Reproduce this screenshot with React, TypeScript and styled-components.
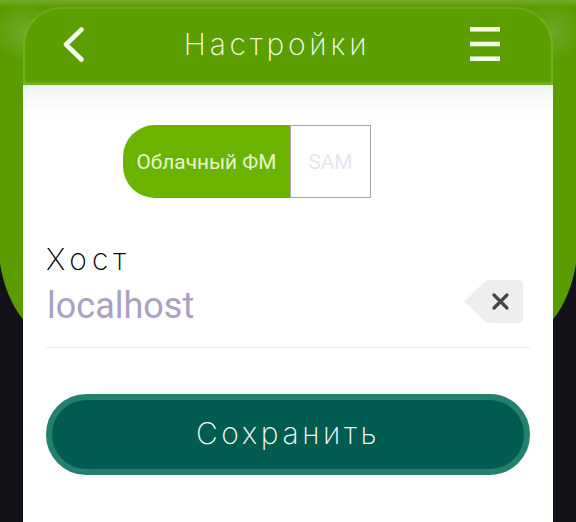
import React from "react";
import styled, { createGlobalStyle } from "styled-components";

const Global = createGlobalStyle`
  html, body { margin: 0; padding: 0; background: #121118; }
  #root { width: 576px; height: 522px; overflow: hidden; }
`;

const Page = styled.div`
  position: relative;
  width: 576px;
  height: 522px;
  overflow: hidden;
  box-sizing: border-box;
  padding: 7px 23px 0 23px;
  display: flex;
  flex-direction: column;
  background: #121118;
  isolation: isolate;
  &::before {
    content: "";
    position: absolute;
    z-index: -1;
    left: -2px;
    right: -2px;
    top: -10px;
    height: 348px;
    border-radius: 0 0 60px 60px / 0 0 100px 100px;
    background:
      linear-gradient(180deg, #7aae32 0, #74aa2a 10px, rgba(116,170,42,0) 17px),
      radial-gradient(circle at 26px 42px, #72aa2a 0, rgba(114,170,42,0) 30px),
      radial-gradient(circle at 554px 42px, #6ea626 0, rgba(110,166,38,0) 30px),
      #5a9c00;
  }
`;

const Header = styled.header`
  box-sizing: border-box;
  height: 78px;
  flex: none;
  display: flex;
  align-items: center;
  justify-content: space-between;
  padding: 0 51px 3px 38px;
  background: #5a9e00;
  border-radius: 38px 38px 0 0;
  border: 2px solid #72b024;
  border-bottom-width: 3px;
  border-top-color: #6aa81c;
`;

const Title = styled.h1`
  margin: 0;
  font: 200 30px Inter, "Noto Sans", sans-serif;
  letter-spacing: 3.8px;
  color: #f6fcea;
`;

const Panel = styled.main`
  flex: 1;
  background: linear-gradient(180deg, #efefef 0, #f8f8f8 10px, #fff 32px);
  padding: 40px 23px 0 23px;
  display: flex;
  flex-direction: column;
`;

const Toggle = styled.div`
  display: flex;
  width: 248px;
  height: 73px;
  margin-left: 77px;
`;

const Segment = styled.div<{ $active?: boolean }>`
  box-sizing: border-box;
  display: flex;
  align-items: center;
  justify-content: center;
  width: ${(p) => (p.$active ? 167 : 81)}px;
  font: 400 20.8px Roboto, "Noto Sans", sans-serif;
  color: ${(p) => (p.$active ? "#e6f5cf" : "#e6e6ee")};
  background: ${(p) => (p.$active ? "#6ab400" : "#fff")};
  border-radius: ${(p) => (p.$active ? "32px 0 0 32px" : "0")};
  border: ${(p) => (p.$active ? "none" : "1px solid #a8a8a8")};
`;

const Label = styled.label`
  margin-top: 43px;
  font: 200 30px Inter, "Noto Sans", sans-serif;
  letter-spacing: 5px;
  line-height: 36px;
  color: #000;
`;

const InputRow = styled.div`
  display: flex;
  align-items: center;
  justify-content: space-between;
  height: 69px;
  margin-top: 1px;
  border-bottom: 1px solid #ededed;
  padding-right: 7px;
`;

const Value = styled.span`
  font: 400 36px Roboto, sans-serif;
  color: #ab9fc2;
  margin-top: -13px;
  margin-left: 1px;
`;

const ClearKey = styled.button`
  width: 59px;
  height: 43px;
  margin-top: -22px;
  padding: 0;
  border: none;
  background: none;
  display: block;
`;

const SaveButton = styled.button`
  box-sizing: border-box;
  width: 484px;
  height: 81px;
  margin-top: 46px;
  padding: 0 0 4px;
  border-radius: 41px;
  border: 6px solid #23806f;
  background: #005c50;
  color: #f4fbf9;
  font: 200 30px Inter, "Noto Sans", sans-serif;
  letter-spacing: 3.6px;
`;

export default function App() {
  return (
    <Page>
      <Global />
      <Header>
        <svg width="21" height="35" viewBox="0 0 21 35" fill="none">
          <path d="M18.5 2.5 3 17.5 18.5 32.5" stroke="#f4fbe8" strokeWidth="4.6" strokeLinecap="round" strokeLinejoin="round" />
        </svg>
        <Title>Настройки</Title>
        <svg width="30" height="34" viewBox="0 0 30 34" fill="#f2f9e4">
          <rect x="0" y="0" width="30" height="4.6" />
          <rect x="0" y="14.7" width="30" height="4.6" />
          <rect x="0" y="29.4" width="30" height="4.6" />
        </svg>
      </Header>
      <Panel>
        <Toggle>
          <Segment $active>Облачный ФМ</Segment>
          <Segment>SAM</Segment>
        </Toggle>
        <Label>Хост</Label>
        <InputRow>
          <Value>localhost</Value>
          <ClearKey aria-label="Очистить">
            <svg width="59" height="43" viewBox="0 0 59 43">
              <path d="M0 21.5 20 2.5Q23 0 26 0H55Q59 0 59 4V39Q59 43 55 43H26Q23 43 20 40.5Z" fill="#eeeeee" />
              <path d="M30 15 43 28M43 15 30 28" stroke="#454545" strokeWidth="3.2" strokeLinecap="round" />
            </svg>
          </ClearKey>
        </InputRow>
        <SaveButton>Сохранить</SaveButton>
      </Panel>
    </Page>
  );
}
